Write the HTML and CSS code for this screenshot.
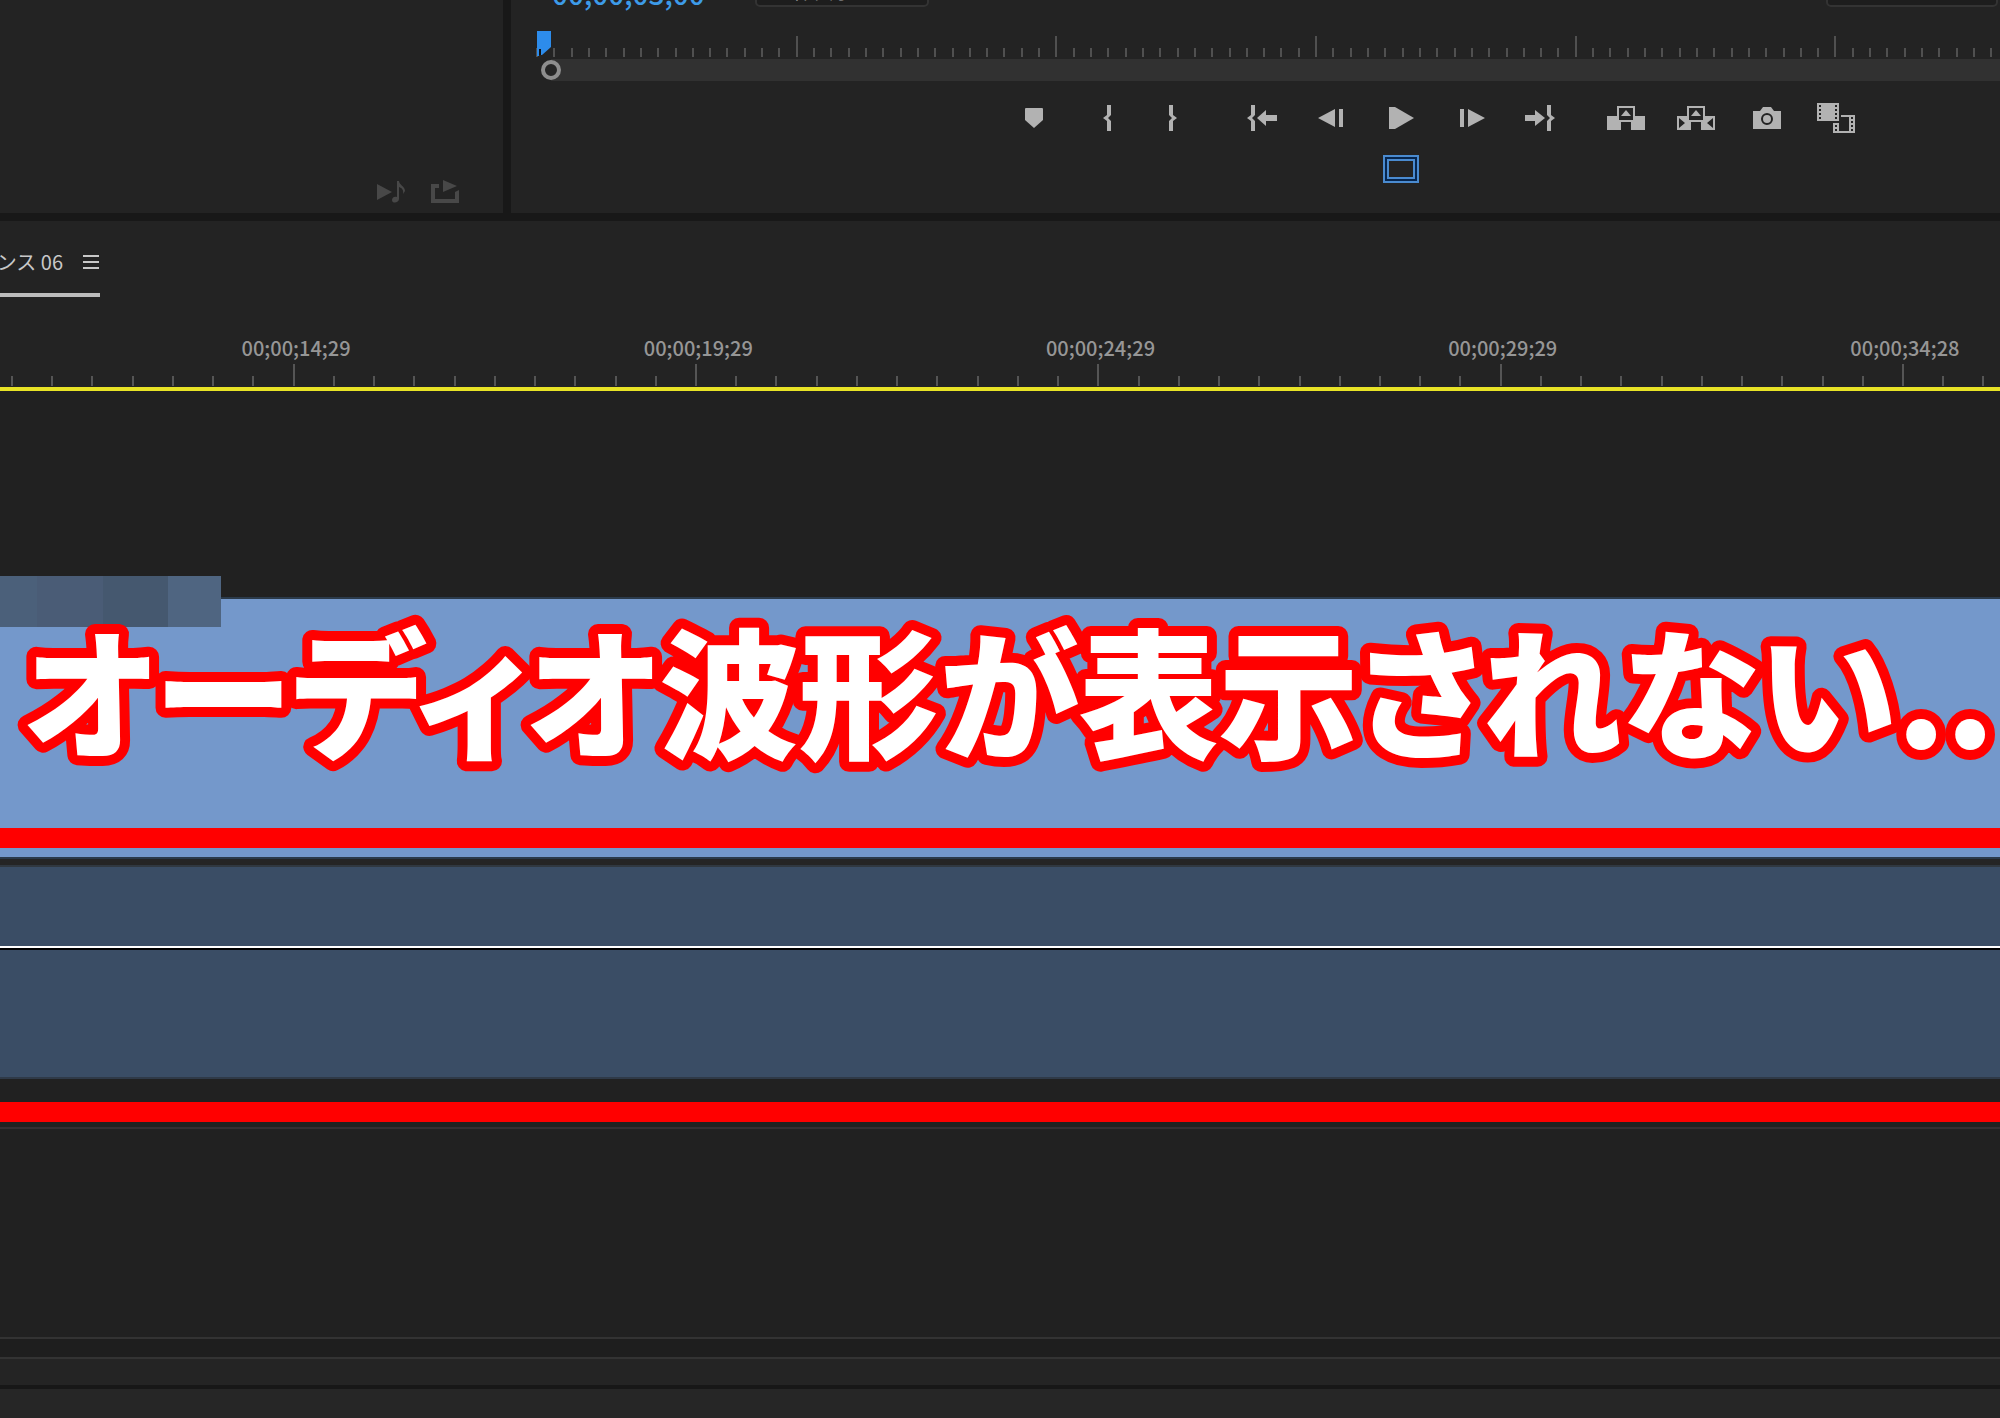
FILE: index.html
```html
<!DOCTYPE html>
<html lang="ja">
<head>
<meta charset="utf-8">
<title>シーケンス 06</title>
<link rel="stylesheet" href="styles.css">
</head>
<body>
<div class="app">
  <div class="monitors">
    <section class="source" aria-label="ソース">
      <button class="tool dim" aria-label="オーディオを再生"><svg width="30" height="24" viewBox="0 0 30 24"><path d="M1 5l15 8-15 8z"/><path d="M21 2h2c0 4 6 5 6 10l-2 3c1-5-2-6-4-7v12c0 4-7 5-7 1 0-3 3-4 5-3z"/></svg></button>
      <button class="tool dim" aria-label="書き出し"><svg width="28" height="24" viewBox="0 0 28 24"><path d="M0 5h8v4H4v11h20v-7l4-2v13H0z"/><path d="M12 1l14 6-14 6z"/></svg></button>
    </section>
    <section class="program" aria-label="プログラム">
      <div class="readout">
        <span class="timecode">00;00;03;00</span>
        <select class="picker fit" aria-label="ズームレベル"><option>全体表示</option></select>
        <select class="picker quality" aria-label="再生時の解像度"><option></option></select>
      </div>
      <div class="scrub">
        <div class="ticks fine" data-count="85" data-major="15" data-first="0"></div>
        <svg class="playhead" width="14" height="26" viewBox="0 0 14 26"><path fill="#2d8ceb" d="M0 0h14v16l-9 8H2v1H0z"/><path fill="#111" d="M2 18h2v6H2z"/></svg>
      </div>
      <div class="zoombar"><span class="handle"></span></div>
      <div class="transport">
        <button class="tool" aria-label="マーカーを追加"><svg width="18" height="20" viewBox="0 0 18 20"><path d="M0 1q0-1 1-1h16q1 0 1 1v11l-9 8-9-8z"/></svg></button>
        <button class="tool g1" aria-label="インをマーク"><svg width="8" height="26" viewBox="0 0 8 26"><path d="M4 0h4v10l-3 3 3 3v10H4V16l-4-3 4-3z"/></svg></button>
        <button class="tool g2" aria-label="アウトをマーク"><svg width="8" height="26" viewBox="0 0 8 26"><path d="M0 0h4v10l4 3-4 3v10H0V16l3-3-3-3z"/></svg></button>
        <button class="tool g3" aria-label="インへ移動"><svg width="30" height="26" viewBox="0 0 30 26"><path d="M4 0h4v10l-3 3 3 3v10H4V16l-4-3 4-3z"/><path d="M10 13l9-8v5h11v6H19v5z"/></svg></button>
        <button class="tool g4" aria-label="前のフレーム"><svg width="25" height="18" viewBox="0 0 25 18"><path d="M0 9l17-9v18zM21 0h4v18h-4z"/></svg></button>
        <button class="tool g5" aria-label="再生"><svg width="25" height="22" viewBox="0 0 25 22"><path d="M0 0h6l19 11L6 22H0z"/></svg></button>
        <button class="tool g5" aria-label="次のフレーム"><svg width="25" height="18" viewBox="0 0 25 18"><path d="M0 0h4v18H0zM8 0l17 9-17 9z"/></svg></button>
        <button class="tool g6" aria-label="アウトへ移動"><svg width="30" height="26" viewBox="0 0 30 26"><path d="M0 10h10V5l10 8-10 8v-5H0zM22 0h4v10l4 3-4 3v10h-4V16l3-3-3-3z"/></svg></button>
        <button class="tool g7" aria-label="リフト"><svg width="38" height="24" viewBox="0 0 38 24"><path fill-rule="evenodd" d="M0 10h10V0h18v10h10v14H24v-8H14v8H0zM12 2v12h14V2z"/><path d="M14 10l5-6 5 6z"/></svg></button>
        <button class="tool g8" aria-label="抽出"><svg width="38" height="24" viewBox="0 0 38 24"><path fill-rule="evenodd" d="M0 10h10V0h18v10h10v14H24v-8H14v8H0zM12 2v12h14V2zM2 12v10l6-5zM36 12v10l-6-5z"/><path d="M14 10l5-6 5 6z"/></svg></button>
        <button class="tool g9" aria-label="フレームを書き出し"><svg width="28" height="22" viewBox="0 0 28 22"><path fill-rule="evenodd" d="M0 4h7l3-4h8l3 4h7v18H0zM14 6a6 6 0 1 0 0 12 6 6 0 1 0 0-12z"/><circle cx="14" cy="12" r="4"/></svg></button>
        <button class="tool g10" aria-label="比較表示"><svg width="38" height="30" viewBox="0 0 38 30"><path fill-rule="evenodd" d="M0 0h22v18H0zM2 2v2h2V2zM2 6v2h2V6zM2 10v2h2v-2zM2 14v2h2v-2zM18 2v2h2V2zM18 6v2h2V6zM18 10v2h2v-2zM18 14v2h2v-2z"/><path fill-rule="evenodd" d="M24 12h14v18H16V20h6v8h10V14h-8zM34 14v2h2v-2zM34 18v2h2v-2zM34 22v2h2v-2zM34 26v2h2v-2zM18 22v2h2v-2zM18 26v2h2v-2z"/></svg></button>
      </div>
      <div class="extras">
        <button class="tool" aria-label="セーフマージン"><svg width="36" height="28" viewBox="0 0 36 28"><path fill="#06264f" d="M0 0h36v28H0z"/><path fill="#232323" d="M6 6h24v16H6z"/><path fill="none" stroke="#4a8bd0" stroke-width="2" d="M1 1h34v26H1zM5 5h26v18H5z"/></svg></button>
      </div>
    </section>
  </div>

  <section class="sequence" aria-label="タイムライン">
    <header class="tabs">
      <div class="tab"><span>ンス 06</span><button class="menu" aria-label="パネルメニュー"><svg width="16" height="14" viewBox="0 0 16 14"><path d="M0 0h16v2H0zM0 6h16v2H0zM0 12h16v2H0z"/></svg></button></div>
    </header>
    <div class="labels"><span>00;00;14;29</span><span>00;00;19;29</span><span>00;00;24;29</span><span>00;00;29;29</span><span>00;00;34;28</span></div>
    <div class="ticks wide" data-count="50" data-major="10" data-first="7"></div>
    <div class="workarea"></div>
    <div class="video-space"></div>
    <div class="clip video">
      <div class="clip-name"><i class="m1"></i><i class="m2"></i><i class="m3"></i><i class="m4"></i></div>
      <h1 class="caption"><svg class="caption-art" width="100%" height="200"><text x="23" y="149">オーディオ波形が表示されない<tspan class="dots">..</tspan></text></svg></h1>
      <div class="mark"></div>
    </div>
    <div class="divider"></div>
    <div class="clip audio"><div class="volume"></div></div>
    <div class="gap"></div>
    <div class="mark"></div>
    <div class="under"></div>
    <div class="empty"></div>
    <div class="master"></div>
    <div class="tail"></div>
  </section>
  <footer class="status"></footer>
</div>
<script src="ticks.js"></script>
</body>
</html>
```
FILE: ticks.js
```
document.querySelectorAll('.ticks').forEach(function (ruler) {
  var count = +ruler.dataset.count;
  var major = +ruler.dataset.major;
  var first = +ruler.dataset.first;
  for (var i = 0; i < count; i++) {
    var tick = document.createElement('span');
    tick.className = i > 0 && i % major === first ? 'tick major' : 'tick';
    ruler.appendChild(tick);
  }
});
```
FILE: styles.css
```css
* { box-sizing: border-box; }
body {
  margin: 0;
  background: #181818;
  color: #c8c8c8;
  font-family: "Noto Sans CJK JP", sans-serif;
  font-size: 20px;
}
.app { display: flex; flex-direction: column; min-height: 100vh; overflow: hidden; }
button { display: flex; padding: 0; border: 0; background: none; color: inherit; }
svg { display: block; fill: currentColor; }

.monitors { display: grid; grid-template-columns: 503px 1fr; column-gap: 8px; height: 213px; }
.source, .program { background: #232323; min-width: 0; overflow: hidden; }
.source { display: flex; align-items: flex-end; justify-content: flex-end; gap: 25px; padding: 0 44px 10px 0; }
.tool { color: #b2b2b2; }
.dim { color: #484848; }

.readout { display: flex; align-items: flex-end; height: 7px; padding: 0 2px 0 41px; }
.timecode { width: 203px; color: #3d9be8; font-size: 28px; font-weight: 500; line-height: 28px; }
.picker {
  appearance: none;
  height: 32px;
  padding: 0 16px;
  border: 2px solid #333;
  border-radius: 5px;
  background: #1d1d1d;
  color: #aaa;
  font: inherit;
  line-height: 28px;
}
.fit { width: 174px; }
.quality { width: 172px; margin-left: auto; }
.scrub { position: relative; height: 52px; padding-top: 29px; margin-left: 26px; }
.ticks { display: flex; align-items: flex-end; }
.tick { flex: 1 1 0; height: 9px; border-left: 2px solid #505050; }
.fine { height: 21px; margin: 0 -7px 0 -1px; }
.fine .major { height: 21px; }
.playhead { position: absolute; left: 0; top: 24px; }
.zoombar { display: flex; align-items: center; height: 22px; margin-left: 40px; background: #313131; }
.handle { width: 20px; height: 20px; margin-left: -10px; border: 4px solid #8e8e8e; border-radius: 50%; background: #262626; }

.transport { display: flex; align-items: center; justify-content: center; height: 74px; padding-left: 375px; padding-right: 7px; }
.g1 { margin-left: 60px; }
.g2 { margin-left: 58px; }
.g3 { margin-left: 70px; }
.g4 { margin-left: 41px; }
.g5 { margin-left: 46px; }
.g6 { margin-left: 40px; }
.g7 { margin-left: 52px; }
.g8 { margin-left: 32px; }
.g9 { margin-left: 38px; }
.g10 { margin-left: 36px; }
.extras { display: flex; justify-content: center; padding-left: 291px; }

.sequence { display: flex; flex-direction: column; flex: 1; margin-top: 8px; background: #232323; overflow: hidden; }
.tabs { display: flex; height: 96px; }
.tab { display: flex; align-items: center; gap: 20px; width: 100px; height: 76px; justify-content: flex-end; border-bottom: 4px solid #bcbcbc; white-space: nowrap; padding: 9px 1px 0 0; }
.labels { display: flex; height: 46px; margin: 0 -106px 0 95px; color: #969696; font-weight: 500; line-height: 61px; }
.labels span { flex: 1 1 0; text-align: center; }
.wide { height: 24px; margin: 0 -23px 0 11px; padding-bottom: 1px; }
.wide .tick { height: 10px; border-color: #555; }
.wide .major { height: 22px; }
.workarea { height: 4px; background: #e8e326; }
.video-space { height: 206px; background: #212121; }

.clip { position: relative; }
.video { height: 262px; border-top: 2px solid #2b3a4a; border-bottom: 2px solid #2b3a4a; background: #7498cb; display: flex; flex-direction: column; }
.clip-name { position: absolute; left: 0; top: -23px; display: flex; height: 51px; }
.clip-name i { height: 51px; }
.m1 { width: 37px; background: #4b607a; }
.m2 { width: 66px; background: #4a5c76; }
.m3 { width: 65px; background: #45586f; }
.m4 { width: 53px; background: #4f6581; }
.caption { position: relative; flex: 1; margin: 0; font-size: 140px; font-weight: 900; line-height: 200px; }
.caption-art {
  overflow: visible;
  fill: #fff;
  stroke: #f00;
  stroke-width: 20px;
  stroke-linejoin: round;
  paint-order: stroke fill;
  font-feature-settings: "palt";
}
.dots { font-feature-settings: normal; font-kerning: none; }
.mark { flex: none; height: 20px; background: #f00; }
.video .mark { margin-bottom: 9px; }
.divider { height: 6px; background: #252525; }
.audio { height: 214px; padding-top: 79px; border-top: 2px solid #303840; border-bottom: 2px solid #2f3a48; background: #3a4d65; }
.volume { height: 4px; border-top: 2px solid #fff; background: #000; }
.gap { height: 23px; background: #212121; }
.under { height: 7px; border-bottom: 2px solid #352f33; background: #212121; }
.empty { height: 208px; background: #212121; }
.master { height: 22px; border-top: 2px solid #333; border-bottom: 2px solid #333; background: #1e1e1e; }
.tail { height: 26px; background: #242424; }
.status { height: 33px; border-top: 4px solid #171717; background: #262626; }
```
